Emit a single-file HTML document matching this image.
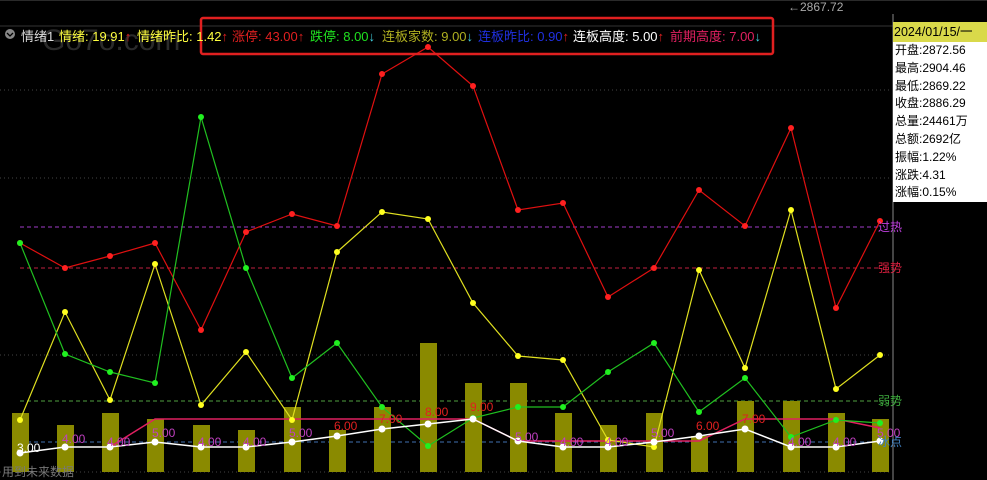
<!DOCTYPE html>
<html><head><meta charset="utf-8"><style>
body{margin:0;background:#000;width:987px;height:480px;overflow:hidden;font-family:"Liberation Sans","Noto Sans CJK SC",sans-serif}
svg{position:absolute;left:0;top:0}
.info{position:absolute;left:893px;top:22px;width:94px;height:180px;background:#fff;color:#000;font-size:12px;line-height:17.8px}
.info .d{background:#d9d94a;height:20px;line-height:20px;font-size:12.5px;padding-left:1px}
.info div{padding-left:2px}
.top{position:absolute;top:26px;font-size:13px;white-space:nowrap}
</style></head><body>
<svg width="987" height="480" font-family="Liberation Sans, Noto Sans CJK SC, sans-serif">
<line x1="0" y1="0" x2="987" y2="0" stroke="#555"/>
<line x1="0" y1="26" x2="893" y2="26" stroke="#333"/>
<line x1="893" y1="14" x2="893" y2="480" stroke="#888"/>
<g stroke="#444" stroke-dasharray="1,3">
<line x1="0" y1="90" x2="893" y2="90"/><line x1="0" y1="178" x2="893" y2="178"/>
<line x1="0" y1="355" x2="893" y2="355"/><line x1="0" y1="472" x2="893" y2="472"/>
</g>
<line x1="20" y1="227" x2="880" y2="227" stroke="#a03cc8" stroke-dasharray="4,3"/>
<line x1="20" y1="268" x2="880" y2="268" stroke="#c02040" stroke-dasharray="4,3"/>
<line x1="20" y1="401" x2="880" y2="401" stroke="#50a040" stroke-dasharray="4,3"/>
<line x1="20" y1="442" x2="880" y2="442" stroke="#4070b0" stroke-dasharray="4,3"/>
<g fill="#8a8a00">
<rect x="12" y="413" width="17" height="59"/><rect x="57" y="425" width="17" height="47"/><rect x="102" y="413" width="17" height="59"/><rect x="147" y="419" width="17" height="53"/><rect x="193" y="425" width="17" height="47"/><rect x="238" y="430" width="17" height="42"/><rect x="284" y="407" width="17" height="65"/><rect x="329" y="430" width="17" height="42"/><rect x="374" y="407" width="17" height="65"/><rect x="420" y="343" width="17" height="129"/><rect x="465" y="383" width="17" height="89"/><rect x="510" y="383" width="17" height="89"/><rect x="555" y="413" width="17" height="59"/><rect x="600" y="425" width="17" height="47"/><rect x="646" y="413" width="17" height="59"/><rect x="691" y="436" width="17" height="36"/><rect x="737" y="401" width="17" height="71"/><rect x="783" y="401" width="17" height="71"/><rect x="828" y="413" width="17" height="59"/><rect x="872" y="419" width="17" height="53"/>
</g>
<polyline fill="none" stroke="#e02060" stroke-width="1.5" points="110,447 155,419 473,419 518,441 563,441 699,441 745,419 836,419 880,428"/>
<polyline fill="none" stroke="#e01010" stroke-width="1.2" points="20,243 65,268 110,256 155,243 201,330 246,232 292,214 337,226 382,74 428,47 473,86 518,210 563,203 608,297 654,268 699,190 745,226 791,128 836,308 880,221"/>
<polyline fill="none" stroke="#e0e020" stroke-width="1.2" points="20,420 65,312 110,400 155,264 201,405 246,352 292,420 337,252 382,212 428,219 473,303 518,356 563,360 608,440 654,447 699,270 745,368 791,210 836,389 880,355"/>
<polyline fill="none" stroke="#20c020" stroke-width="1.2" points="20,243 65,354 110,372 155,383 201,117 246,268 292,378 337,343 382,407 428,446 473,418 518,407 563,407 608,372 654,343 699,412 745,378 791,437 836,420 880,423"/>
<polyline fill="none" stroke="#fff" stroke-width="1.5" points="20,453 65,447 110,447 155,442 201,447 246,447 292,442 337,436 382,429 428,424 473,419 518,441 563,447 608,447 654,442 699,436 745,429 791,447 836,447 880,441"/>
<g fill="#ff2020"><circle cx="20" cy="243" r="3"/><circle cx="65" cy="268" r="3"/><circle cx="110" cy="256" r="3"/><circle cx="155" cy="243" r="3"/><circle cx="201" cy="330" r="3"/><circle cx="246" cy="232" r="3"/><circle cx="292" cy="214" r="3"/><circle cx="337" cy="226" r="3"/><circle cx="382" cy="74" r="3"/><circle cx="428" cy="47" r="3"/><circle cx="473" cy="86" r="3"/><circle cx="518" cy="210" r="3"/><circle cx="563" cy="203" r="3"/><circle cx="608" cy="297" r="3"/><circle cx="654" cy="268" r="3"/><circle cx="699" cy="190" r="3"/><circle cx="745" cy="226" r="3"/><circle cx="791" cy="128" r="3"/><circle cx="836" cy="308" r="3"/><circle cx="880" cy="221" r="3"/></g>
<g fill="#ffff20"><circle cx="20" cy="420" r="3"/><circle cx="65" cy="312" r="3"/><circle cx="110" cy="400" r="3"/><circle cx="155" cy="264" r="3"/><circle cx="201" cy="405" r="3"/><circle cx="246" cy="352" r="3"/><circle cx="292" cy="420" r="3"/><circle cx="337" cy="252" r="3"/><circle cx="382" cy="212" r="3"/><circle cx="428" cy="219" r="3"/><circle cx="473" cy="303" r="3"/><circle cx="518" cy="356" r="3"/><circle cx="563" cy="360" r="3"/><circle cx="608" cy="440" r="3"/><circle cx="654" cy="447" r="3"/><circle cx="699" cy="270" r="3"/><circle cx="745" cy="368" r="3"/><circle cx="791" cy="210" r="3"/><circle cx="836" cy="389" r="3"/><circle cx="880" cy="355" r="3"/></g>
<g fill="#20f020"><circle cx="20" cy="243" r="3"/><circle cx="65" cy="354" r="3"/><circle cx="110" cy="372" r="3"/><circle cx="155" cy="383" r="3"/><circle cx="201" cy="117" r="3"/><circle cx="246" cy="268" r="3"/><circle cx="292" cy="378" r="3"/><circle cx="337" cy="343" r="3"/><circle cx="382" cy="407" r="3"/><circle cx="428" cy="446" r="3"/><circle cx="473" cy="418" r="3"/><circle cx="518" cy="407" r="3"/><circle cx="563" cy="407" r="3"/><circle cx="608" cy="372" r="3"/><circle cx="654" cy="343" r="3"/><circle cx="699" cy="412" r="3"/><circle cx="745" cy="378" r="3"/><circle cx="791" cy="437" r="3"/><circle cx="836" cy="420" r="3"/><circle cx="880" cy="423" r="3"/></g>
<g fill="#fff"><circle cx="20" cy="453" r="3.5"/><circle cx="65" cy="447" r="3.5"/><circle cx="110" cy="447" r="3.5"/><circle cx="155" cy="442" r="3.5"/><circle cx="201" cy="447" r="3.5"/><circle cx="246" cy="447" r="3.5"/><circle cx="292" cy="442" r="3.5"/><circle cx="337" cy="436" r="3.5"/><circle cx="382" cy="429" r="3.5"/><circle cx="428" cy="424" r="3.5"/><circle cx="473" cy="419" r="3.5"/><circle cx="518" cy="441" r="3.5"/><circle cx="563" cy="447" r="3.5"/><circle cx="608" cy="447" r="3.5"/><circle cx="654" cy="442" r="3.5"/><circle cx="699" cy="436" r="3.5"/><circle cx="745" cy="429" r="3.5"/><circle cx="791" cy="447" r="3.5"/><circle cx="836" cy="447" r="3.5"/><circle cx="880" cy="441" r="3.5"/></g>
<g font-size="12">
<text x="17" y="452" fill="#fff">3.00</text>
<text x="62" y="443" fill="#c040c0">4.00</text><text x="107" y="446" fill="#c040c0">4.00</text><text x="152" y="437" fill="#c040c0">5.00</text><text x="198" y="446" fill="#c040c0">4.00</text><text x="243" y="446" fill="#c040c0">4.00</text><text x="289" y="437" fill="#c040c0">5.00</text>
<text x="334" y="430" fill="#e02020">6.00</text><text x="379" y="423" fill="#e02020">7.00</text><text x="425" y="416" fill="#e02020">8.00</text><text x="470" y="411" fill="#e02020">9.00</text>
<text x="515" y="441" fill="#c040c0">5.00</text><text x="560" y="446" fill="#c040c0">4.00</text><text x="605" y="446" fill="#c040c0">4.00</text><text x="651" y="437" fill="#c040c0">5.00</text>
<text x="696" y="430" fill="#e02020">6.00</text><text x="742" y="423" fill="#e02020">7.00</text><text x="788" y="446" fill="#c040c0">4.00</text><text x="833" y="446" fill="#c040c0">4.00</text><text x="877" y="437" fill="#c040c0">5.00</text>
<text x="878" y="231" fill="#c040e0">过热</text><text x="878" y="272" fill="#e02040">强势</text><text x="878" y="405" fill="#40b040">弱势</text><text x="878" y="446" fill="#4080c0">冰点</text>
<text x="2" y="476" fill="#777">用到未来数据</text>
<text x="788" y="11" fill="#aaa">←2867.72</text>
</g>
<rect x="201" y="18" width="572" height="36" fill="none" stroke="#e02020" stroke-width="2.5" rx="2"/>
<circle cx="10" cy="34" r="5" fill="#888"/><path d="M7 33 L10 36 L13 33" stroke="#000" fill="none" stroke-width="1.3"/>
<text x="42" y="50" font-size="30" fill="#555" opacity="0.5">Go7o.com</text>
</svg>
<div class="top" style="left:21px;color:#ddd">情绪1</div>
<div class="top" style="left:59px;color:#ffff40">情绪: 19.91<span style="color:#e02020">↑</span></div>
<div class="top" style="left:137px;color:#ffff40">情绪昨比: 1.42<span style="color:#e02020">↑</span></div>
<div class="top" style="left:232px;color:#e02020">涨停: 43.00↑</div>
<div class="top" style="left:310px;color:#20e020">跌停: 8.00<span style="color:#40d0e0">↓</span></div>
<div class="top" style="left:382px;color:#b0b020">连板家数: 9.00<span style="color:#40d0e0">↓</span></div>
<div class="top" style="left:478px;color:#2030e0">连板昨比: 0.90<span style="color:#e02020">↑</span></div>
<div class="top" style="left:573px;color:#fff">连板高度: 5.00<span style="color:#e02020">↑</span></div>
<div class="top" style="left:670px;color:#e02060">前期高度: 7.00<span style="color:#40d0e0">↓</span></div>
<div class="info"><div class="d">2024/01/15/一</div><div>开盘:2872.56</div><div>最高:2904.46</div><div>最低:2869.22</div><div>收盘:2886.29</div><div>总量:24461万</div><div>总额:2692亿</div><div>振幅:1.22%</div><div>涨跌:4.31</div><div>涨幅:0.15%</div></div>
</body></html>
